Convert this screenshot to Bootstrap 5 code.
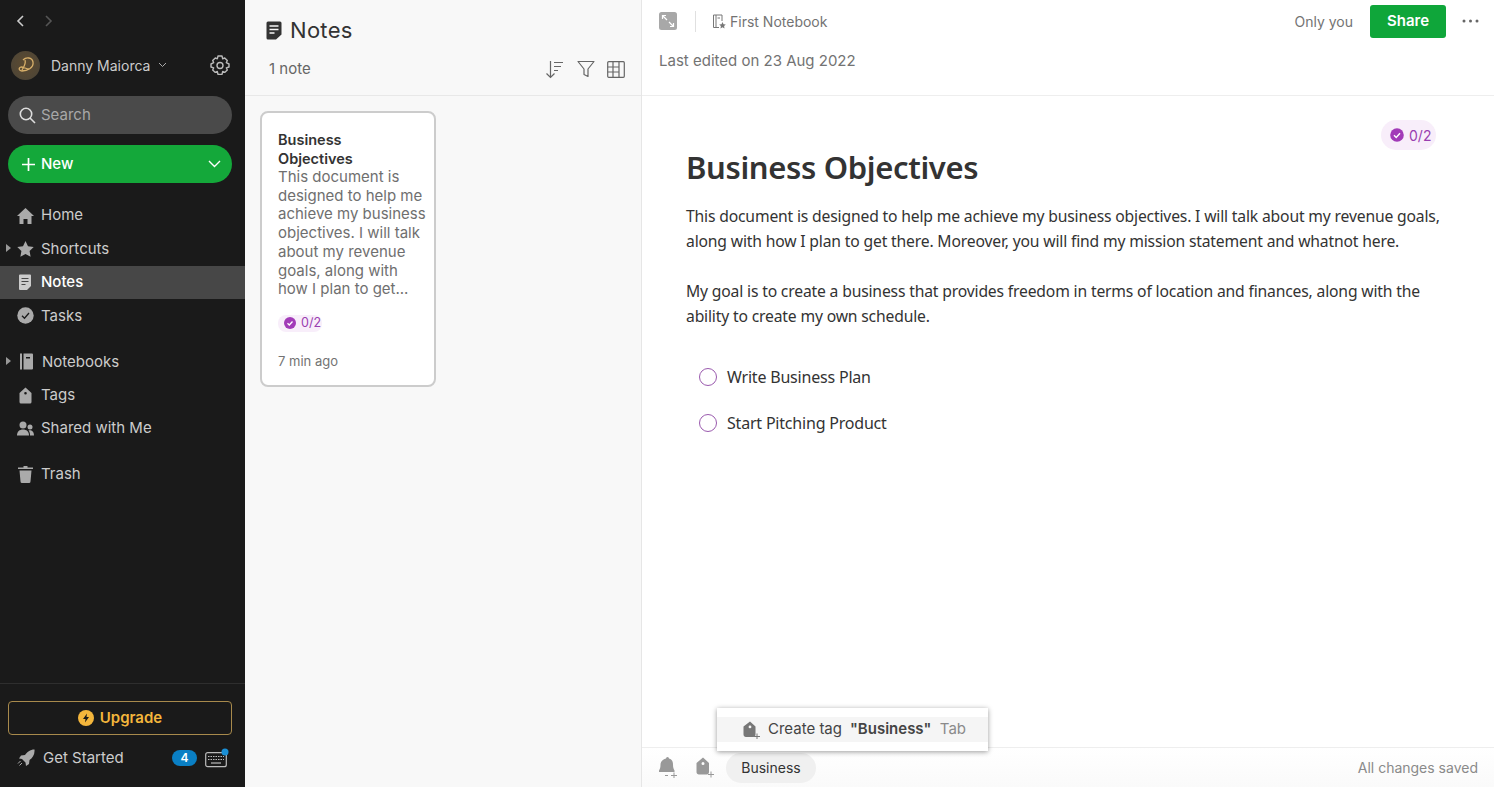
<!DOCTYPE html>
<html lang="en">
<head>
  <meta charset="UTF-8">
  <title>Business Objectives</title>
  <link href="https://cdn.jsdelivr.net/npm/bootstrap@5.3.0/dist/css/bootstrap.min.css" rel="stylesheet">
  <style>
    html, body { height: 100%; overflow: hidden; }
    body { font-family: Inter, "Liberation Sans", sans-serif; font-size: 15px; color: #333; background: #fff; }
    svg { display: block; flex-shrink: 0; }
    .app-shell { height: 787px; position: relative; }

    .side-panel { width: 245px; background: #1a1a1a; color: #ccc; }
    .hist-row { height: 44px; padding: 14px 0 0 14px; gap: 16px; }
    .user-row { height: 42px; padding: 0 14px 0 11px; }
    .user-pic { width: 29px; height: 29px; border-radius: 50%; background: radial-gradient(circle at 50% 45%, #5c4a30, #4a4438); }
    .user-name { font-size: 14px; margin-left: 11px; color: #ccc; }
    .search-pill { height: 38px; margin: 10px 13px 0 8px; padding: 0 10px; background: #4a4a4a; border-radius: 19px; color: #a8a8a8; gap: 4px; }
    .new-pill { height: 38px; margin: 11px 13px 0 8px; padding: 0 11px 0 11px; background: #14a83a; border-radius: 19px; color: #fff; font-weight: 500; gap: 3px; border: 0; }
    .nav-stack { margin-top: 16px; }
    .nav-line { height: 33.4px; position: relative; padding-left: 17px; gap: 7px; color: #ccc; }
    .nav-line.is-on { background: #474747; color: #fff; font-weight: 500; }
    .nav-gap { margin-top: 12.6px; }
    .caret-mark { position: absolute; left: 6px; top: 12px; width: 0; height: 0; border-left: 5px solid #999; border-top: 4.5px solid transparent; border-bottom: 4.5px solid transparent; }
    .side-foot { border-top: 1px solid #2e2e2e; padding-top: 17px; }
    .upgrade-box { height: 34px; margin: 0 13px 0 8px; border: 1px solid #a88a4c; border-radius: 4px; color: #f4b63c; font-weight: 600; gap: 6px; }
    .start-row { height: 52px; padding: 0 16px 6px 17px; color: #ccc; }
    .count-pill { background: #0a7fc4; color: #fff; font-size: 12px; font-weight: 600; width: 25px; height: 16px; border-radius: 8px; }

    .list-panel { width: 397px; background: #f8f8f8; border-right: 1px solid #e6e6e6; }
    .list-head { height: 96px; border-bottom: 1px solid #e8e8e8; padding: 18px 16px 0 21px; }
    .list-title { font-size: 22px; color: #333; line-height: 24px; letter-spacing: .3px; }
    .list-count { font-size: 15px; color: #666; padding-left: 3px; }
    .note-tile { width: 176px; height: 276px; margin: 15px 0 0 15px; background: #fff; border: 2px solid #ccc; border-radius: 8px; padding: 17px 16px 0 16px; }
    .tile-title { font-size: 14.5px; font-weight: 600; line-height: 19px; color: #333; }
    .tile-body { font-size: 15px; line-height: 18.7px; color: #6f6f6f; white-space: nowrap; }
    .task-chip { background: #f8eefa; color: #9a3fb0; font-size: 12.5px; border-radius: 8px; gap: 5px; }
    .tile-chip { width: 44px; height: 17px; margin-top: 16px; padding-left: 6px; }
    .tile-time { font-size: 13px; color: #737373; margin-top: 20px; }

    .edit-panel { min-width: 0; background: #fff; }
    .edit-head { height: 96px; border-bottom: 1px solid #eee; padding: 0 15px 0 17px; position: relative; }
    .edit-top { height: 41px; padding-top: 1px; }
    .divider-tick { width: 1px; height: 21px; background: #e0e0e0; margin: 0 16px 0 18px; }
    .book-link { font-size: 14px; color: #737373; gap: 4px; }
    .only-you { font-size: 14px; color: #737373; margin-right: 17px; }
    .share-btn { width: 76px; height: 33px; background: #0fa63a; color: #fff; font-weight: 600; font-size: 15px; border: 0; border-radius: 3px; padding: 0; margin-right: 16px; }
    .edited-line { font-size: 15px; color: #737373; margin-top: 9px; }
    .doc-area { position: relative; padding: 48px 0 0 44px; font-family: "Noto Sans", sans-serif; color: #333; }
    .doc-chip { position: absolute; top: 24px; right: 58px; width: 55px; height: 30px; border-radius: 15px; padding-left: 9px; font-family: Inter, sans-serif; font-size: 14px; }
    .doc-title { font-size: 31px; font-weight: 600; line-height: 46px; margin: 0 0 14px; letter-spacing: -.35px; }
    .doc-text { font-size: 15.7px; line-height: 25px; margin: 0 0 25px; width: 750px; white-space: nowrap; letter-spacing: -.17px; }
    .check-line { font-size: 16px; height: 46px; padding-left: 13px; gap: 10px; letter-spacing: -.2px; }
    .check-ring { width: 18px; height: 18px; border: 1.5px solid #9a5aae; border-radius: 50%; }
    .tag-bar { height: 40px; border-top: 1px solid #eee; padding: 0 16px 0 15px; background: linear-gradient(#fff, #fafafa); }
    .tag-pill { width: 90px; height: 30px; border-radius: 15px; background: #f0f0f0; font-size: 14px; color: #333; margin-left: 11px; }
    .saved-note { font-size: 14px; color: #8a8a8a; }
    .tag-pop { position: absolute; left: 717px; top: 708px; width: 271px; height: 43px; background: #fff; box-shadow: 0 1px 5px rgba(0,0,0,.4); padding: 9px 0; }
    .pop-row { height: 25px; background: #f5f5f5; font-size: 15px; color: #444; padding: 0 22px 0 26px; }
    .pop-tab { color: #8a8a8a; margin-left: auto; }
  </style>
</head>
<body>
<div class="app-shell d-flex">

  <div class="side-panel d-flex flex-column flex-shrink-0">
    <div class="hist-row d-flex">
      <svg width="12" height="14" viewBox="0 0 12 14" fill="none" stroke="#ccc" stroke-width="1.6"><path d="M9 2 4 7l5 5"/></svg>
      <svg width="12" height="14" viewBox="0 0 12 14" fill="none" stroke="#555" stroke-width="1.6"><path d="M4 2l5 5-5 5"/></svg>
    </div>
    <div class="user-row d-flex align-items-center">
      <div class="user-pic d-flex align-items-center justify-content-center">
        <svg width="22" height="22" viewBox="0 0 22 22" fill="none" stroke="#d8b06a" stroke-width="1.3"><path d="M8 6c3-3 9-3 10 2 1 6-6 9-11 9-3 0-4-3-1-4 3 0 5 2 8 2M10 6c1 3-1 7-3 10"/></svg>
      </div>
      <span class="user-name">Danny Maiorca</span>
      <svg class="ms-2" width="9" height="6" viewBox="0 0 9 6" fill="none" stroke="#aaa"><path d="M1 1l3.5 3.5L8 1"/></svg>
      <svg class="ms-auto" width="22" height="22" viewBox="0 0 22 22" fill="none" stroke="#bbb" stroke-width="1.4"><path d="M9 2h4l.7 2.8 2-.9 2.6 2.6-1 2.2L20 10v3l-2.7.8 1 2.2-2.6 2.4-2-.9L13 20.4H9l-.7-2.9-2 .9-2.6-2.4 1-2.2L2 13v-3l2.7-1.3-1-2.2 2.6-2.6 2 .9z" stroke-linejoin="round"/><circle cx="11" cy="11.5" r="3"/></svg>
    </div>
    <div class="search-pill d-flex align-items-center">
      <svg width="19" height="19" viewBox="0 0 19 19" fill="none" stroke="#ddd" stroke-width="1.6"><circle cx="8" cy="8" r="5.7"/><path d="M12 12l5 5"/></svg>
      <span>Search</span>
    </div>
    <div class="new-pill d-flex align-items-center">
      <svg width="19" height="19" viewBox="0 0 19 19" fill="none" stroke="#fff" stroke-width="1.7"><path d="M9.5 3v13M3 9.5h13"/></svg>
      <span>New</span>
      <svg class="ms-auto" width="13" height="8" viewBox="0 0 13 8" fill="none" stroke="#fff" stroke-width="1.4"><path d="M1 1l5.500 5.500L12 1"/></svg>
    </div>

    <div class="nav-stack">
      <div class="nav-line d-flex align-items-center">
        <svg width="17" height="16" viewBox="0 0 17 16" fill="#aaa"><path d="M8.500 0 17 8h-2.500v8H10.500v-5h-4v5H2.500V8H0z"/></svg>
        <span>Home</span>
      </div>
      <div class="nav-line d-flex align-items-center">
        <span class="caret-mark"></span>
        <svg width="17" height="16" viewBox="0 0 17 16" fill="#aaa"><path d="M8.500 0l2.500 5.200 5.700.8-4.100 4 1 5.700-5.100-2.700-5.100 2.700 1-5.700-4.100-4 5.700-.8z"/></svg>
        <span>Shortcuts</span>
      </div>
      <div class="nav-line is-on d-flex align-items-center">
        <svg width="17" height="17" viewBox="0 0 17 17"><path fill="#ccc" d="M3 .5h10a1 1 0 0 1 1 1V12l-4 4H3a1 1 0 0 1-1-1V1.500a1 1 0 0 1 1-1z"/><path stroke="#474747" stroke-width="1.200" d="M4.500 4.500h7M4.500 7.500h7M4.500 10.500h4"/></svg>
        <span>Notes</span>
      </div>
      <div class="nav-line d-flex align-items-center">
        <svg width="17" height="17" viewBox="0 0 17 17"><circle cx="8.500" cy="8.500" r="8.200" fill="#aaa"/><path fill="none" stroke="#1a1a1a" stroke-width="1.300" d="M5 8.700l2.500 2.500L12 6"/></svg>
        <span>Tasks</span>
      </div>
      <div class="nav-line nav-gap d-flex align-items-center">
        <span class="caret-mark"></span>
        <svg width="18" height="17" viewBox="0 0 18 17" fill="#aaa"><path d="M3 .5h2v16H3z"/><path fill-rule="evenodd" d="M6.500.5H15a1 1 0 0 1 1 1v14a1 1 0 0 1-1 1H6.500zM9 4v1.500h4V4z"/></svg>
        <span>Notebooks</span>
      </div>
      <div class="nav-line d-flex align-items-center">
        <svg width="17" height="17" viewBox="0 0 17 17" fill="#aaa"><path fill-rule="evenodd" d="M8.500.5 14.500 6v9a1.500 1.500 0 0 1-1.500 1.500H4A1.500 1.500 0 0 1 2.500 15V6zM8.500 5a1.300 1.300 0 1 0 0 2.600 1.300 1.300 0 0 0 0-2.600z"/></svg>
        <span>Tags</span>
      </div>
      <div class="nav-line d-flex align-items-center">
        <svg width="17" height="15" viewBox="0 0 17 15" fill="#aaa"><circle cx="6" cy="4" r="3.500"/><path d="M0 14.500c0-4 2.500-6 6-6s6 2 6 6z"/><circle cx="13" cy="6" r="2.500"/><path d="M13 14.500c0-2.500-.500-4-1.500-5 2.500-.8 5.500.5 5.500 5z"/></svg>
        <span>Shared with Me</span>
      </div>
      <div class="nav-line nav-gap d-flex align-items-center">
        <svg width="17" height="17" viewBox="0 0 17 17" fill="#aaa"><path d="M6.500 0h4v1.500H16V3H1V1.500h5.500zM2.500 4.500h12l-1 11a1.500 1.500 0 0 1-1.500 1.500H5a1.500 1.500 0 0 1-1.500-1.500z"/></svg>
        <span>Trash</span>
      </div>
    </div>

    <div class="side-foot mt-auto">
      <div class="upgrade-box d-flex align-items-center justify-content-center">
        <svg width="16" height="16" viewBox="0 0 16 16"><circle cx="8" cy="8" r="8" fill="#f4b63c"/><path fill="#1a1a1a" d="M9 3.500 5 9h2.500L7 12.500 11 7H8.500z"/></svg>
        <span>Upgrade</span>
      </div>
      <div class="start-row d-flex align-items-center">
        <svg width="18" height="18" viewBox="0 0 18 18" fill="#aaa"><path d="M17.500.5c.500 5-2 8.500-5 10.500l-.5 4-3 2-.5-3.500-3.500-3.500L2 9.500l2-3 4-.5C10 3 13 .5 17.500.5z"/><path stroke="#aaa" d="M3.500 12 1 14.500M5 14l-2.500 2.500"/></svg>
        <span class="ms-2">Get Started</span>
        <span class="count-pill d-flex align-items-center justify-content-center ms-auto">4</span>
        <svg class="ms-2" width="24" height="20" viewBox="0 0 24 20" fill="none"><rect x=".7" y="4.700" width="20.600" height="14" rx="2" stroke="#bbb" stroke-width="1.200"/><path stroke="#bbb" stroke-dasharray="1.500 1" d="M3 8.500h16M3 11.500h16"/><path stroke="#bbb" stroke-width="1.200" d="M6 15h10"/><circle cx="20" cy="4" r="3.500" fill="#1a8fd6"/></svg>
      </div>
    </div>
  </div>

  <div class="list-panel d-flex flex-column flex-shrink-0">
    <div class="list-head">
      <div class="list-title d-flex align-items-center gap-2">
        <svg width="16" height="19" viewBox="0 0 16 19"><path fill="#333" d="M2 .5h12a1.500 1.500 0 0 1 1.500 1.500v11.500L10 18.500H2A1.500 1.500 0 0 1 .5 17V2A1.500 1.500 0 0 1 2 .5z"/><path stroke="#f8f8f8" stroke-width="1.500" d="M3.500 5h9M3.500 8.500h9M3.500 12h5"/></svg>
        <span>Notes</span>
      </div>
      <div class="d-flex align-items-center justify-content-between list-tools mt-3">
        <span class="list-count">1 note</span>
        <div class="d-flex align-items-center gap-2">
          <svg width="20" height="19" viewBox="0 0 20 19" fill="none" stroke="#666" stroke-width="1.200"><path d="M5.500 1v16M1.500 13.500l4 4 4-4M9 2.500h9M9 6.500h7M9 10.500h4"/></svg>
          <svg class="ms-1" width="18" height="18" viewBox="0 0 18 18" fill="none" stroke="#666" stroke-width="1.200"><path d="M1 1.500h16L11 9v7.500l-4-2V9z" stroke-linejoin="round"/></svg>
          <svg class="ms-1" width="18" height="17" viewBox="0 0 18 17" fill="none" stroke="#666" stroke-width="1.200"><rect x=".7" y=".7" width="16.600" height="15.600" rx="1"/><path d="M6 .7v15.600M12 .7v15.600M.7 6h11.300M.7 11h11.300"/></svg>
        </div>
      </div>
    </div>
    <div class="note-tile">
      <div class="tile-title">Business<br>Objectives</div>
      <div class="tile-body">This document is<br>designed to help me<br>achieve my business<br>objectives. I will talk<br>about my revenue<br>goals, along with<br>how I plan to get...</div>
      <div class="task-chip tile-chip d-flex align-items-center">
        <svg width="12" height="12" viewBox="0 0 12 12"><circle cx="6" cy="6" r="6" fill="#a23bb8"/><path fill="none" stroke="#fff" stroke-width="1.300" d="M3.500 6.200 5.300 8l3.200-3.500"/></svg>
        <span>0/2</span>
      </div>
      <div class="tile-time">7 min ago</div>
    </div>
  </div>

  <div class="edit-panel flex-grow-1 d-flex flex-column">
    <div class="edit-head">
      <div class="edit-top d-flex align-items-center">
        <svg width="18" height="18" viewBox="0 0 18 18"><rect width="18" height="18" rx="2.500" fill="#a8a8a8"/><path fill="none" stroke="#fff" stroke-width="1.200" d="M3.500 7V3.500H7M3.500 3.500l4.500 4.500M14.500 11v3.500H11M14.500 14.500 10 10"/></svg>
        <span class="divider-tick"></span>
        <div class="book-link d-flex align-items-center">
          <svg width="14" height="15" viewBox="0 0 14 15" fill="none" stroke="#777"><path d="M1.500 1v12.500M1.500 1H10v6M1.500 13.500H7M4 1v12.500M5.500 4H8"/><path fill="#777" stroke="none" d="M10.500 8l1 2.200 2.300.3-1.700 1.600.4 2.400-2-1.200-2 1.200.4-2.400-1.700-1.600 2.300-.3z"/></svg>
          <span>First Notebook</span>
        </div>
        <span class="only-you ms-auto">Only you</span>
        <button class="share-btn btn">Share</button>
        <svg width="17" height="4" viewBox="0 0 17 4" fill="#666"><circle cx="2" cy="2" r="1.500"/><circle cx="8.500" cy="2" r="1.500"/><circle cx="15" cy="2" r="1.500"/></svg>
      </div>
      <div class="edited-line">Last edited on 23 Aug 2022</div>
    </div>

    <div class="doc-area flex-grow-1">
      <div class="task-chip doc-chip d-flex align-items-center">
        <svg width="14" height="14" viewBox="0 0 14 14"><circle cx="7" cy="7" r="6.800" fill="#a23bb8"/><path fill="none" stroke="#fff" stroke-width="1.400" d="M4 7.200l2.200 2.200L10 5.200"/></svg>
        <span>0/2</span>
      </div>
      <h1 class="doc-title">Business Objectives</h1>
      <p class="doc-text">This document is designed to help me achieve my business objectives. I will talk about my revenue goals,<br>along with how I plan to get there. Moreover, you will find my mission statement and whatnot here.</p>
      <p class="doc-text">My goal is to create a business that provides freedom in terms of location and finances, along with the<br>ability to create my own schedule.</p>
      <div class="check-line d-flex align-items-center"><span class="check-ring"></span><span>Write Business Plan</span></div>
      <div class="check-line d-flex align-items-center"><span class="check-ring"></span><span>Start Pitching Product</span></div>
    </div>

    <div class="tag-bar d-flex align-items-center">
      <svg width="21" height="21" viewBox="0 0 21 21" fill="#999"><path d="M9 1.500a1.500 1.500 0 0 1 3 0c3 .8 4 3 4 6 0 3 .5 4.500 1.500 6v1.500H2v-1.500c1-1.500 1.500-3 1.500-6 0-3 2.500-5.200 5.500-6z"/><path stroke="#999" fill="none" d="M8 18.500h3M14 18.500h6M17 15.500v6"/></svg>
      <svg class="ms-3" width="21" height="21" viewBox="0 0 21 21" fill="#999"><path fill-rule="evenodd" d="M9 .5l6 5.500v9c0 1.500-1 2.500-2 2.500H5c-1.500 0-2.500-1-2.500-2.500V6zM9 5a1.500 1.500 0 1 0 0 3 1.500 1.500 0 0 0 0-3z"/><path stroke="#999" fill="none" d="M14 17.500h6M17 14.500v6"/></svg>
      <span class="tag-pill d-flex align-items-center justify-content-center">Business</span>
      <span class="saved-note ms-auto">All changes saved</span>
    </div>
  </div>

  <div class="tag-pop">
    <div class="pop-row d-flex align-items-center">
      <svg class="me-2" width="17" height="18" viewBox="0 0 17 18" fill="#777"><path fill-rule="evenodd" d="M7 .5l5.500 5v8c0 1.500-1 2.500-2 2.500H3c-1.500 0-2.500-1-2.500-2.500v-8zM7 4.500a1.400 1.400 0 1 0 0 2.800 1.400 1.400 0 0 0 0-2.800z"/><path stroke="#777" fill="none" d="M11 15.500h6M14 12.500v5.500"/></svg>
      <span>Create tag</span>
      <strong class="ms-2 fw-semibold">"Business"</strong>
      <span class="pop-tab">Tab</span>
    </div>
  </div>
</div>

<script src="https://cdn.jsdelivr.net/npm/bootstrap@5.3.0/dist/js/bootstrap.bundle.min.js"></script>
</body>
</html>
